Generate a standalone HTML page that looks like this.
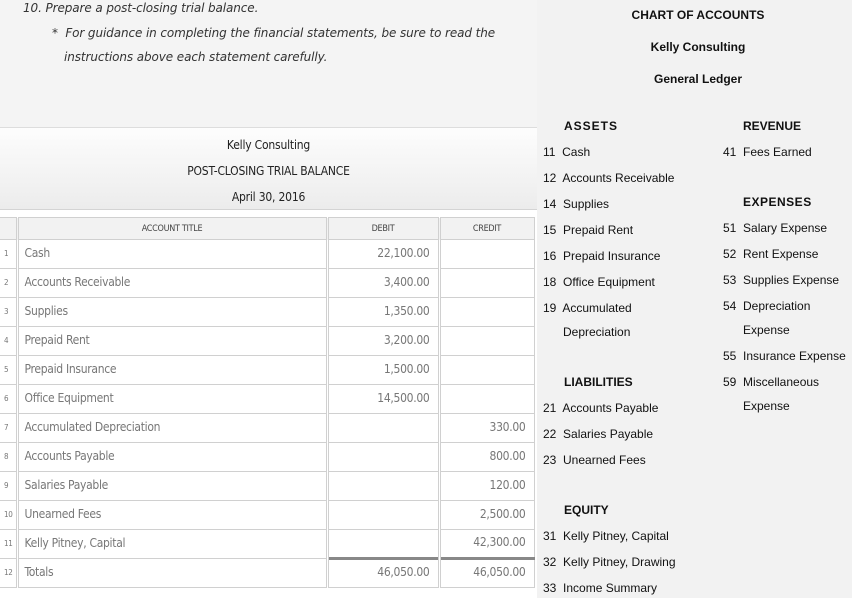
<!DOCTYPE html>
<html><head><style>
*{margin:0;padding:0;box-sizing:border-box}
body{width:852px;height:598px;background:#fff;position:relative;overflow:hidden;font-family:"Liberation Sans",Arial,sans-serif}
.top{position:absolute;left:0;top:0;width:537px;height:128px;background:#f4f4f4;border-bottom:1px solid #ddd}
.top div{position:absolute;font-family:"DejaVu Sans",Verdana,sans-serif;font-style:italic;font-size:12px;color:#333;white-space:nowrap;letter-spacing:-0.1px}
.hdr{position:absolute;left:0;top:128px;width:537px;height:82px;background:linear-gradient(#fdfdfd,#ececec);border-bottom:1px solid #d4d4d4}
.hdr div,.tbl{font-family:"Liberation Sans Narrow","DejaVu Sans Condensed",sans-serif}
.hdr div{position:absolute;left:0;width:537px;text-align:center;font-size:12px;color:#222;letter-spacing:-0.2px}
.tbl{position:absolute;left:0;top:217px;border-collapse:collapse;font-size:12px;color:#777;letter-spacing:-0.3px}
.tbl td{border:1px solid #d0d0d0;border-left:3px double #d0d0d0;height:29px;padding:0 6px 3px;white-space:nowrap}
.tbl tr.h td{height:22px;font-size:9px;color:#444;text-align:center;background:#f2f2f2;padding:0}
.tbl td.n{width:17px;font-size:8px;padding:0 0 2px 4px;border-left:none}
.tbl td.r{text-align:right;padding-right:8px}
.tbl tr.tot td.m{border-top:3px solid #888}
.rp{position:absolute;left:537px;top:0;width:315px;height:598px;background:#f2f2f2}
.rp div{position:absolute;font-size:12px;color:#111;white-space:nowrap;line-height:14px}
.b{font-weight:bold}
.c{left:0;width:322px;text-align:center}
</style></head><body>
<div class="top">
<div style="left:23px;top:1px">10. Prepare a post-closing trial balance.</div>
<div style="left:52px;top:26px">* &nbsp;For guidance in completing the financial statements, be sure to read the</div>
<div style="left:64px;top:50px">instructions above each statement carefully.</div>
</div>
<div class="hdr">
<div style="top:10px">Kelly Consulting</div>
<div style="top:36px">POST-CLOSING TRIAL BALANCE</div>
<div style="top:62px">April 30, 2016</div>
</div>
<table class="tbl">
<tr class="h"><td class="n"></td><td style="width:310px">ACCOUNT TITLE</td><td style="width:112px">DEBIT</td><td style="width:95px">CREDIT</td></tr>
<tr><td class="n">1</td><td>Cash</td><td class="r">22,100.00</td><td></td></tr>
<tr><td class="n">2</td><td>Accounts Receivable</td><td class="r">3,400.00</td><td></td></tr>
<tr><td class="n">3</td><td>Supplies</td><td class="r">1,350.00</td><td></td></tr>
<tr><td class="n">4</td><td>Prepaid Rent</td><td class="r">3,200.00</td><td></td></tr>
<tr><td class="n">5</td><td>Prepaid Insurance</td><td class="r">1,500.00</td><td></td></tr>
<tr><td class="n">6</td><td>Office Equipment</td><td class="r">14,500.00</td><td></td></tr>
<tr><td class="n">7</td><td>Accumulated Depreciation</td><td></td><td class="r">330.00</td></tr>
<tr><td class="n">8</td><td>Accounts Payable</td><td></td><td class="r">800.00</td></tr>
<tr><td class="n">9</td><td>Salaries Payable</td><td></td><td class="r">120.00</td></tr>
<tr><td class="n">10</td><td>Unearned Fees</td><td></td><td class="r">2,500.00</td></tr>
<tr><td class="n">11</td><td>Kelly Pitney, Capital</td><td></td><td class="r">42,300.00</td></tr>
<tr class="tot"><td class="n">12</td><td>Totals</td><td class="r m">46,050.00</td><td class="r m">46,050.00</td></tr>
</table>
<div class="rp">
<div class="b c" style="top:8px">CHART OF ACCOUNTS</div>
<div class="b c" style="top:40px">Kelly Consulting</div>
<div class="b c" style="top:72px">General Ledger</div>
<div class="b" style="left:27px;top:119px;letter-spacing:1px">ASSETS</div>
<div style="left:6px;top:145px">11&nbsp; Cash</div>
<div style="left:6px;top:171px">12&nbsp; Accounts Receivable</div>
<div style="left:6px;top:197px">14&nbsp; Supplies</div>
<div style="left:6px;top:223px">15&nbsp; Prepaid Rent</div>
<div style="left:6px;top:249px">16&nbsp; Prepaid Insurance</div>
<div style="left:6px;top:275px">18&nbsp; Office Equipment</div>
<div style="left:6px;top:301px">19&nbsp; Accumulated</div>
<div style="left:26px;top:325px">Depreciation</div>
<div class="b" style="left:27px;top:375px">LIABILITIES</div>
<div style="left:6px;top:401px">21&nbsp; Accounts Payable</div>
<div style="left:6px;top:427px">22&nbsp; Salaries Payable</div>
<div style="left:6px;top:453px">23&nbsp; Unearned Fees</div>
<div class="b" style="left:27px;top:503px">EQUITY</div>
<div style="left:6px;top:529px">31&nbsp; Kelly Pitney, Capital</div>
<div style="left:6px;top:555px">32&nbsp; Kelly Pitney, Drawing</div>
<div style="left:6px;top:581px">33&nbsp; Income Summary</div>
<div class="b" style="left:206px;top:119px">REVENUE</div>
<div style="left:186px;top:145px">41&nbsp; Fees Earned</div>
<div class="b" style="left:206px;top:195px;letter-spacing:.5px">EXPENSES</div>
<div style="left:186px;top:221px">51&nbsp; Salary Expense</div>
<div style="left:186px;top:247px">52&nbsp; Rent Expense</div>
<div style="left:186px;top:273px">53&nbsp; Supplies Expense</div>
<div style="left:186px;top:299px">54&nbsp; Depreciation</div>
<div style="left:206px;top:323px">Expense</div>
<div style="left:186px;top:349px">55&nbsp; Insurance Expense</div>
<div style="left:186px;top:375px">59&nbsp; Miscellaneous</div>
<div style="left:206px;top:399px">Expense</div>
</div>
</body></html>
